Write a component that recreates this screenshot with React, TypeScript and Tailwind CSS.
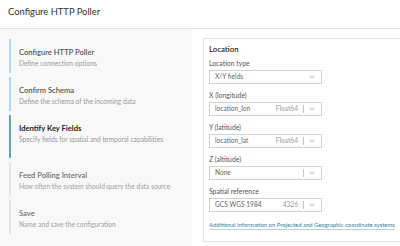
import React from 'react';

type Step = { title: string; desc: string; state: 'done' | 'active' | 'todo' };

const steps: Step[] = [
  { title: 'Configure HTTP Poller', desc: 'Define connection options', state: 'done' },
  { title: 'Confirm Schema', desc: 'Define the schema of the incoming data', state: 'done' },
  { title: 'Identify Key Fields', desc: 'Specify fields for spatial and temporal capabilities', state: 'active' },
  { title: 'Feed Polling Interval', desc: 'How often the system should query the data source', state: 'todo' },
  { title: 'Save', desc: 'Name and save the configuration', state: 'todo' },
];

const Chevron = () => (
  <svg width="6" height="4" viewBox="0 0 6 4" className="shrink-0">
    <path d="M0.5 0.7 L3 3.2 L5.5 0.7" fill="none" stroke="#999" strokeWidth="0.8" />
  </svg>
);

const Field = ({ label, value, type, plain }: { label: string; value: string; type?: string; plain?: boolean }) => (
  <div className="mt-[6px]">
    <div className="text-[6.8px] leading-[10px] text-[#555]">{label}</div>
    <div className="mt-[2px] flex h-[14px] w-[113px] items-center border border-[#d2d2d2] bg-white pl-[5px] pr-[6px] text-[6.6px] text-[#666]">
      <span className="flex-1 truncate">{value}</span>
      {plain ? (
        <Chevron />
      ) : (
        <>
          {type && <span className="text-[#999]">{type}</span>}
          <span className="mx-[5px] h-[8px] w-px bg-[#c4c4c4]" />
          <Chevron />
        </>
      )}
    </div>
  </div>
);

const App = () => {
  return (
    <div className="h-[246px] w-[400px] overflow-hidden bg-white" style={{ fontFamily: 'Lato, "Open Sans", sans-serif' }}>
      {/* Header */}
      <div className="flex h-[29px] items-center border-b border-[#e4e4e4] pl-[8px] pb-[4px]">
        <h1 className="text-[9.4px] text-[#323232]">Configure HTTP Poller</h1>
      </div>

      <div className="flex h-[217px]">
        {/* Steps */}
        <aside className="w-[192px] shrink-0 bg-[#f8f8f8] pl-[9px] pt-[10px]">
          <div className="flex flex-col gap-[4px]">
            {steps.map((s) => (
              <div
                key={s.title}
                className={
                  'border-l-2 pl-[8px] pt-[8px] ' +
                  (s.state === 'done'
                    ? 'border-[#acd8ec] pb-[5px]'
                    : s.state === 'active'
                    ? 'border-[#62a9a8] pb-[14px]'
                    : 'border-[#e6e6e6] pb-[5px]')
                }
              >
                <div
                  className={
                    'text-[7.6px] leading-[11px] ' +
                    (s.state === 'active'
                      ? 'font-bold text-[#1e1e1e]'
                      : s.state === 'done'
                      ? 'font-semibold text-[#555]'
                      : 'font-semibold text-[#707070]')
                  }
                >
                  {s.title}
                </div>
                <div className={'text-[6.7px] leading-[10px] ' + (s.state === 'todo' ? 'text-[#a0a0a0]' : 'text-[#999]')}>
                  {s.desc}
                </div>
              </div>
            ))}
          </div>
        </aside>

        {/* Form */}
        <main className="flex-1 pl-[11px] pt-[9px]">
          <div className="h-[204px] w-[220px] border border-[#e2e2e2] bg-white pl-[5px] pt-[5px]">
            <div className="text-[7.8px] font-semibold leading-[11px] text-[#2b2b2b]">Location</div>
            <div className="-mt-[3px]">
              <Field label="Location type" value="X/Y fields" plain />
              <Field label="X (longitude)" value="location_lon" type="Float64" />
              <Field label="Y (latitude)" value="location_lat" type="Float64" />
              <Field label="Z (altitude)" value="None" />
              <Field label="Spatial reference" value="GCS WGS 1984" type="4326" />
            </div>
            <a
              href="#"
              className="mt-[8px] block text-[5.9px] leading-[10px] text-[#2a84a4] underline decoration-[#b0d0dc] underline-offset-[1.5px]"
            >
              Additional information on Projected and Geographic coordinate systems
            </a>
          </div>
        </main>
      </div>
    </div>
  );
};

export default App;
